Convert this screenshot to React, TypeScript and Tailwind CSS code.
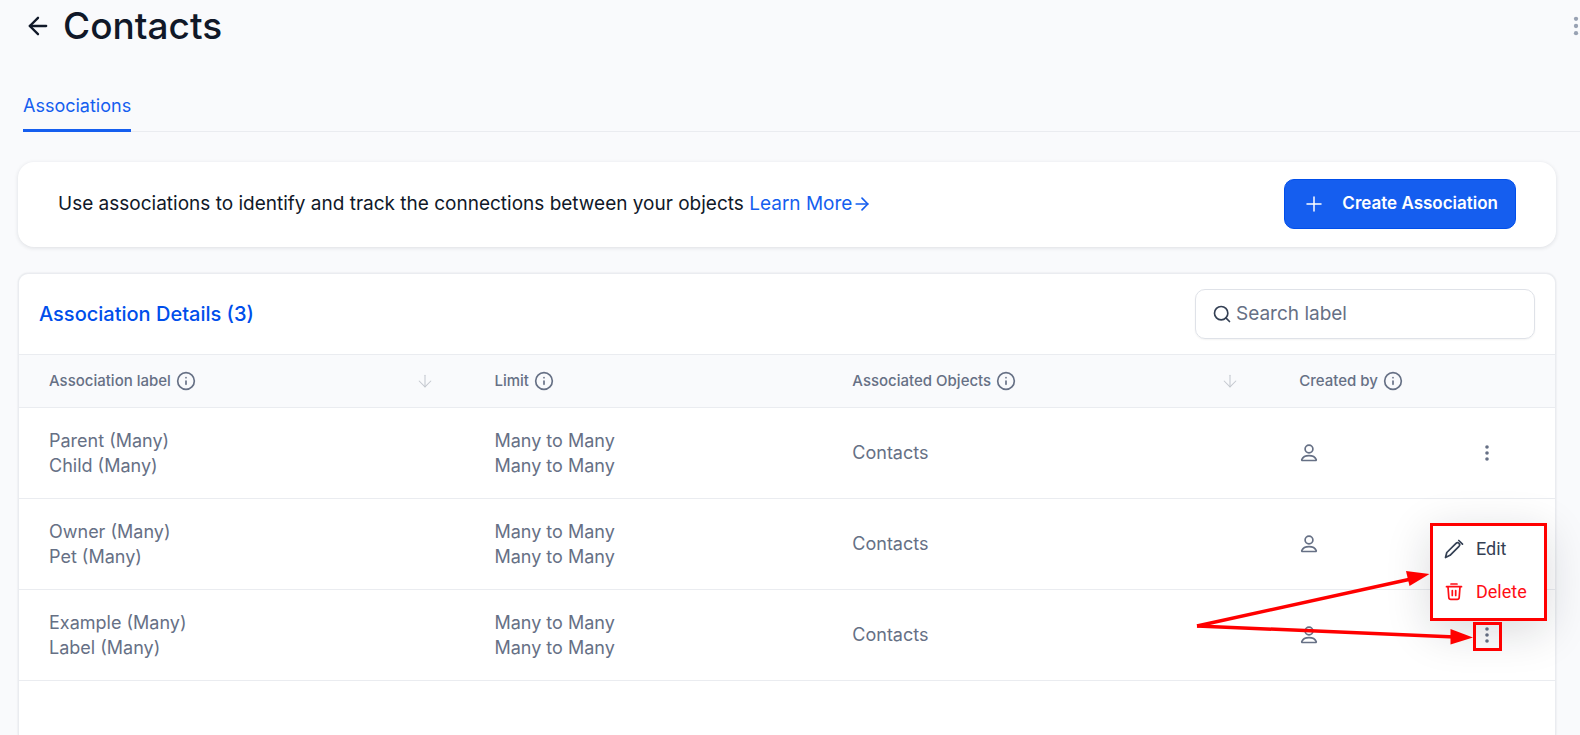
import { useState } from "react";
import { ArrowDown, ArrowLeft, ArrowRight, Info, Plus, Search } from "lucide-react";

const associations = [
  { labels: ["Parent (Many)", "Child (Many)"], limits: ["Many to Many", "Many to Many"], object: "Contacts" },
  { labels: ["Owner (Many)", "Pet (Many)"], limits: ["Many to Many", "Many to Many"], object: "Contacts" },
  { labels: ["Example (Many)", "Label (Many)"], limits: ["Many to Many", "Many to Many"], object: "Contacts" },
];

const columns = [
  { title: "Association label", sortable: true, width: "w-[29%]" },
  { title: "Limit", sortable: false, width: "w-[23.3%]" },
  { title: "Associated Objects", sortable: true, width: "w-[29.1%]" },
  { title: "Created by", sortable: false, width: "w-[11.6%]" },
];

function Dots({ className }: { className: string }) {
  return (
    <svg className={className} viewBox="0 0 20 20" fill="currentColor" aria-hidden="true">
      <circle cx="10" cy="4" r="1.8" />
      <circle cx="10" cy="10" r="1.8" />
      <circle cx="10" cy="16" r="1.8" />
    </svg>
  );
}

function Person() {
  return (
    <svg className="h-5 w-5" viewBox="0 0 20 20" fill="none" stroke="currentColor" strokeWidth="1.7" strokeLinejoin="round">
      <circle cx="10" cy="6" r="3.9" />
      <path d="M10 12.6c-3.6 0-6.2 1.5-7.2 3.9-.2.6.1 1 .7 1h13c.6 0 .9-.4.7-1-1-2.4-3.6-3.9-7.2-3.9Z" />
    </svg>
  );
}

function Pencil() {
  return (
    <svg className="h-5 w-5" viewBox="0 0 20 20" fill="none" stroke="currentColor" strokeWidth="1.7" strokeLinejoin="round">
      <path d="M1.5 18.5l1.3-5L12 4.3c1-1 2.1-1 3 0 .9.9.9 2 0 3L6 16.3l-4.500 2.2Z" />
      <path d="M14.8 1.5l3.700 3.700" strokeLinecap="round" />
    </svg>
  );
}

function Trash() {
  return (
    <svg className="h-5 w-5" viewBox="0 0 20 20" fill="none" stroke="currentColor" strokeWidth="1.7" strokeLinecap="round" strokeLinejoin="round">
      <path d="M2.5 4.7h15M7 2h6" />
      <path d="M4 4.9l.8 10.6c.1 1.2.8 1.900 2 1.900h6.400c1.200 0 1.900-.7 2-1.900L16 4.900" />
      <path d="M8.3 8.5v5M11.7 8.5v5" />
    </svg>
  );
}

// Arrows and frame that point at the open row menu
function Callout() {
  return (
    <svg
      className="pointer-events-none absolute -right-px -bottom-px h-[84px] w-[310px]"
      viewBox="0 0 310 84"
      fill="none"
      stroke="#ff0000"
      strokeWidth="3.5">
      <path d="M4 58 L218 11" />
      <path d="M4 58 L262 69" />
      <path d="M236.5 6 L213 3 L216.5 18 Z" fill="#ff0000" stroke="none" />
      <path d="M280 69.5 L257.5 61 L257.5 76.5 Z" fill="#ff0000" stroke="none" />
      <rect x="281.5" y="55.5" width="26" height="26" strokeWidth="3" />
    </svg>
  );
}

function RowMenu() {
  return (
    <div className="absolute right-[-45px] bottom-[30px] flex w-[117px] flex-col gap-[19px] border-3 border-[#ff0000] bg-white pt-[11px] pb-[14px] pl-[11px] font-[Roboto,sans-serif] text-lg shadow-[0_10px_45px_rgba(16,24,40,0.16)]">
      <button type="button" className="flex items-center gap-3 leading-6 text-[#344054]">
        <Pencil />
        Edit
      </button>
      <button type="button" className="flex items-center gap-3 leading-6 text-[#ff0d14]">
        <Trash />
        Delete
      </button>
    </div>
  );
}

export default function App() {
  const [search, setSearch] = useState("");
  const [openRow, setOpenRow] = useState<number | null>(2);

  const rows = associations.filter((item) =>
    item.labels.join(" ").toLowerCase().includes(search.toLowerCase())
  );

  return (
    <div className="flex h-screen flex-col overflow-hidden bg-[#f9fafc] font-[Inter,sans-serif] text-[#101828]">
      <header className="flex items-center justify-between pl-6">
        <div className="flex items-center gap-[11px]">
          <button type="button" aria-label="Back">
            <ArrowLeft className="size-7" />
          </button>
          <h1 className="text-[37px] leading-[52px] font-medium">Contacts</h1>
        </div>
        <button type="button" aria-label="More options" className="-mr-2 text-[#98a2b3]">
          <Dots className="size-6" />
        </button>
      </header>

      <nav className="mt-[38px] ml-[23px] flex border-b border-[#eaecf0]">
        <a href="#" className="-mb-px border-b-3 border-[#155eef] pt-1 pb-[11px] text-lg leading-6 text-[#155eef]">
          Associations
        </a>
      </nav>

      <main className="mt-[30px] mr-6 ml-[18px] flex flex-1 flex-col gap-[26px]">
        <section className="flex items-center justify-between rounded-2xl bg-white px-10 pt-[17px] pb-[18px] shadow-[0_1px_4px_rgba(16,24,40,0.12)]">
          <p className="flex text-[19px] leading-7">
            Use associations to identify and track the connections between your objects&nbsp;
            <a href="#" className="flex items-center text-[#155eef]">
              Learn More
              <ArrowRight className="size-5" />
            </a>
          </p>
          <button
            type="button"
            className="flex h-[50px] items-center gap-4 rounded-[10px] border border-[#004eeb] bg-[#155eef] px-[17px] text-[17px] font-semibold text-white">
            <Plus className="size-6" strokeWidth={1.5} />
            Create Association
          </button>
        </section>

        <section className="flex-1 rounded-t-[10px] border-x border-t border-[#eaecf0] bg-white shadow-[0_0_2px_rgba(16,24,40,0.12)]">
          <div className="flex items-center justify-between border-b border-[#eaecf0] px-5 py-[15px]">
            <h2 className="text-xl font-medium text-[#004eeb]">Association Details (3)</h2>
            <label className="flex h-[50px] w-[340px] items-center gap-1 rounded-[10px] border border-[#dfe2e8] px-4 text-[#344054] shadow-xs">
              <Search className="size-5 shrink-0" />
              <input
                type="text"
                aria-label="Search label"
                placeholder="Search label"
                value={search}
                onChange={(e) => setSearch(e.target.value)}
                className="w-full text-[19px] outline-none placeholder:text-[#667085]"
              />
            </label>
          </div>

          <table className="w-full table-fixed text-left text-[#667085]">
            <thead>
              <tr className="h-[52px] border-b border-[#eaecf0] bg-[#f9fafc] text-[15px]">
                {columns.map((column) => (
                  <th key={column.title} className={`${column.width} pl-[30px] font-medium whitespace-nowrap`}>
                    <div className="flex items-center gap-[5px]">
                      {column.title}
                      <Info className="size-5 shrink-0" />
                      {column.sortable && <ArrowDown className="mr-[29px] ml-auto size-5 text-[#c4c8cf]" strokeWidth={1.25} />}
                    </div>
                  </th>
                ))}
                <th aria-label="Actions"></th>
              </tr>
            </thead>
            <tbody>
              {rows.map((item, index) => (
                <tr key={item.labels[0]} className="h-[91px] border-b border-[#eaecf0] text-lg leading-[25px]">
                  <td className="pl-[30px]">
                    {item.labels.map((label, i) => (
                      <div key={i}>{label}</div>
                    ))}
                  </td>
                  <td className="pl-[30px]">
                    {item.limits.map((limit, i) => (
                      <div key={i}>{limit}</div>
                    ))}
                  </td>
                  <td className="pl-[30px]">{item.object}</td>
                  <td className="pl-[30px]">
                    <Person />
                  </td>
                  <td>
                    <div className="relative ml-auto mr-[53px] flex h-8 w-[30px] items-center justify-center">
                      <button
                        type="button"
                        aria-label="Row actions"
                        onClick={() => setOpenRow(openRow === index ? null : index)}>
                        <Dots className="size-5" />
                      </button>
                      {openRow === index && (
                        <>
                          <RowMenu />
                          <Callout />
                        </>
                      )}
                    </div>
                  </td>
                </tr>
              ))}
            </tbody>
          </table>
        </section>
      </main>
    </div>
  );
}
